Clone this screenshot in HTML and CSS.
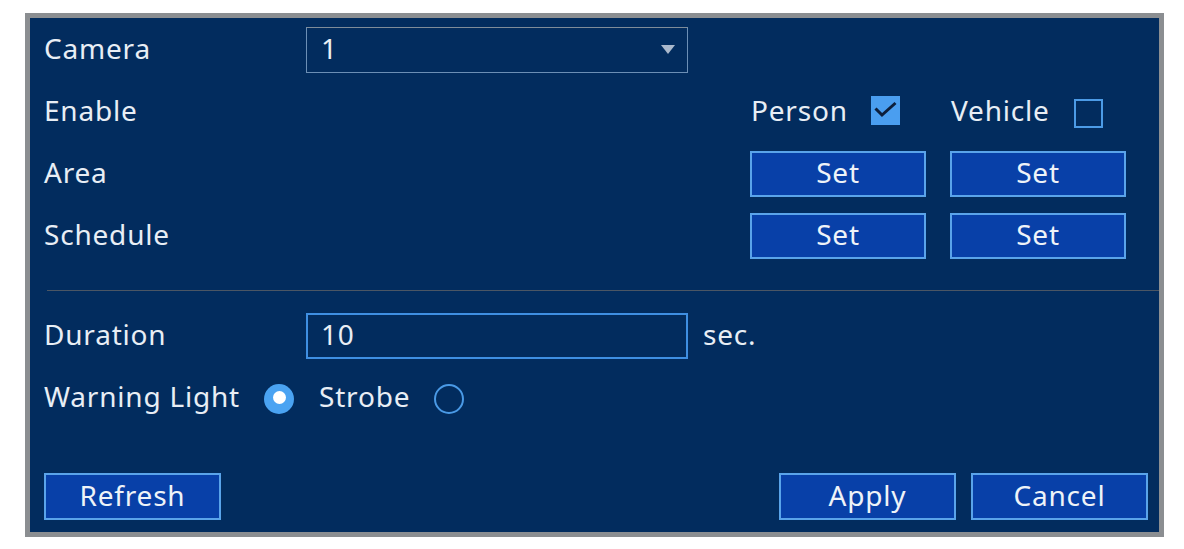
FILE: index.html
```html
<!DOCTYPE html>
<html>
<head>
<meta charset="utf-8">
<link rel="stylesheet" href="styles.css">
</head>
<body>
<div class="frame">
  <div class="panel">
    <div class="top">
      <div class="row">
        <div class="label">Camera</div>
        <div class="select"><span>1</span><span class="arrow"></span></div>
      </div>
      <div class="row">
        <div class="label">Enable</div>
        <div class="cols">
          <div class="col chk-col"><span>Person</span><span class="chk on"><svg width="29" height="29" viewBox="0 0 29 29"><path d="M4.5 12.5 L11 19 L24.5 7" fill="none" stroke="#0d1f3c" stroke-width="3"/></svg></span></div>
          <div class="col chk-col second"><span>Vehicle</span><span class="chk off"></span></div>
        </div>
      </div>
      <div class="row">
        <div class="label">Area</div>
        <div class="cols">
          <button class="btn col">Set</button>
          <button class="btn col">Set</button>
        </div>
      </div>
      <div class="row">
        <div class="label">Schedule</div>
        <div class="cols">
          <button class="btn col">Set</button>
          <button class="btn col">Set</button>
        </div>
      </div>
    </div>
    <div class="divider"></div>
    <div class="mid">
      <div class="row">
        <div class="label">Duration</div>
        <div class="input">10</div>
        <div class="unit">sec.</div>
      </div>
      <div class="row radios">
        <span>Warning Light</span>
        <span class="radio on"></span>
        <span>Strobe</span>
        <span class="radio off"></span>
      </div>
    </div>
    <div class="footer">
      <button class="btn wide">Refresh</button>
      <div class="right">
        <button class="btn wide">Apply</button>
        <button class="btn wide">Cancel</button>
      </div>
    </div>
  </div>
</div>
</body>
</html>
```
FILE: styles.css
```css
html, body {
  margin: 0;
  padding: 0;
  background: #ffffff;
}
body {
  padding: 13px 0 0 25px;
  font-family: "Noto Sans", "Open Sans", sans-serif;
  font-size: 28px;
  letter-spacing: 0.8px;
  color: #e8eef5;
}
.frame {
  width: 1129px;
  height: 514px;
  border: 5px solid #8b8e91;
  background: #022c5e;
}
.panel {
  height: 100%;
  display: flex;
  flex-direction: column;
  padding: 9px 0 12px 14px;
  box-sizing: border-box;
}
.top {
  display: flex;
  flex-direction: column;
  gap: 16px;
}
.row {
  height: 46px;
  display: flex;
  align-items: center;
}
.row > span, .label, .unit, .select > span:first-child, .input, .chk-col > span:first-child {
  line-height: 1;
  padding-bottom: 4px;
}
.label {
  width: 262px;
  flex: none;
}
.select {
  width: 382px;
  height: 46px;
  box-sizing: border-box;
  border: 1px solid #6c8fb5;
  border-top-color: #7f8c99;
  display: flex;
  align-items: center;
  justify-content: space-between;
  padding: 0 12px 0 14px;
}
.arrow {
  width: 0;
  height: 0;
  border-left: 7px solid transparent;
  border-right: 7px solid transparent;
  border-top: 9px solid #aab9cc;
  margin-top: -2px;
}
.cols {
  margin-left: 444px;
  display: flex;
  gap: 24px;
}
.col {
  width: 176px;
  flex: none;
}
.chk-col {
  display: flex;
  align-items: center;
  padding-left: 1px;
  box-sizing: border-box;
}
.chk-col .chk {
  margin-left: auto;
  margin-right: 26px;
}
.chk-col.second .chk {
  margin-right: 23px;
}
.chk {
  width: 29px;
  height: 29px;
  box-sizing: border-box;
  display: flex;
  align-items: center;
  justify-content: center;
  flex: none;
}
.chk.on {
  background: #4a9ef0;
  margin-top: -3px;
}
.chk.off {
  border: 2px solid #4c9be6;
  margin-top: 3px;
}
.btn {
  height: 46px;
  box-sizing: border-box;
  background: #0840a8;
  border: 2px solid #5aa4ea;
  color: #eef3f8;
  font-family: inherit;
  font-size: 28px;
  letter-spacing: 0.8px;
  padding: 0 0 4px;
  line-height: 1;
}
.divider {
  height: 1px;
  background: #4b5664;
  margin: 31px 0 22px 3px;
}
.mid {
  display: flex;
  flex-direction: column;
  gap: 16px;
}
.input {
  width: 382px;
  height: 46px;
  box-sizing: border-box;
  border: 2px solid #3f8fe2;
  display: flex;
  align-items: center;
  padding-left: 13px;
}
.unit {
  margin-left: 15px;
}
.radio {
  width: 30px;
  height: 30px;
  border-radius: 50%;
  box-sizing: border-box;
  flex: none;
}
.radio.on {
  background: #4aa3f2;
  margin: 2px 25px 0 24px;
  display: flex;
  align-items: center;
  justify-content: center;
}
.radio.on::after {
  content: "";
  width: 13px;
  height: 13px;
  border-radius: 50%;
  background: #ffffff;
}
.radio.off {
  border: 2px solid #4a9ae6;
  margin: 2px 0 0 24px;
}
.footer {
  margin-top: auto;
  display: flex;
  justify-content: space-between;
  padding-right: 11px;
}
.wide {
  width: 177px;
  height: 47px;
}
.right {
  display: flex;
  gap: 15px;
}
```
